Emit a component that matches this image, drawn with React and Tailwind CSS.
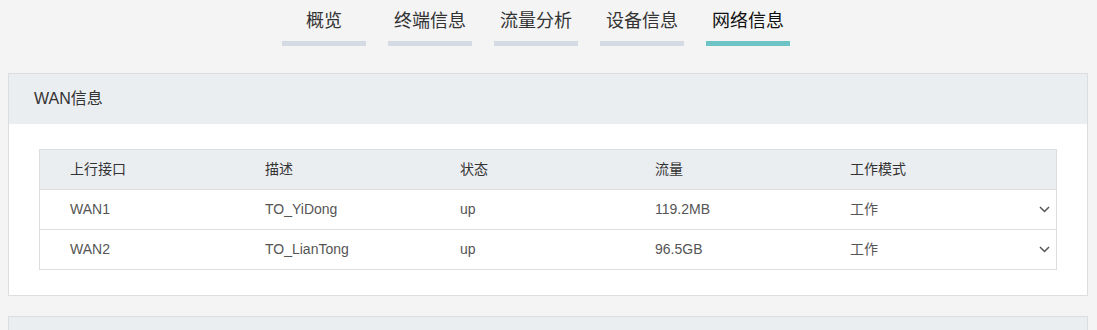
import React from "react";

const tabs = ["概览", "终端信息", "流量分析", "设备信息", "网络信息"];
const rows = [
  ["WAN1", "TO_YiDong", "up", "119.2MB", "工作"],
  ["WAN2", "TO_LianTong", "up", "96.5GB", "工作"],
];

function Chevron() {
  return (
    <svg width="11" height="7" viewBox="0 0 11 7" fill="none">
      <path d="M1 1l4.5 4.5L10 1" stroke="#555" strokeWidth="1.5" />
    </svg>
  );
}

export default function App() {
  const font = { fontFamily: '"Liberation Sans", "Noto Sans CJK SC", sans-serif' };
  return (
    <div className="w-[1097px] h-[330px] overflow-hidden bg-[#f4f4f4]" style={font}>
      <div className="flex justify-center pr-[25px] gap-[22px] pt-[9px]">
        {tabs.map((t, i) => (
          <div key={t} className="w-[84px] flex flex-col items-center">
            <div className={`h-[24px] leading-[24px] text-[18px] ${i === 4 ? "text-[#111]" : "text-[#333]"}`}>{t}</div>
            <div className={`mt-[8px] h-[5px] w-full ${i === 4 ? "bg-[#6cc5c4]" : "bg-[#d5dbe3]"}`} />
          </div>
        ))}
      </div>

      <div className="mt-[27px] ml-[8px] mr-[9px] border border-[#dddddd] bg-white">
        <div className="h-[50px] bg-[#ebeef1] px-[25px] flex items-center text-[16px] text-[#333]">WAN信息</div>
        <div className="px-[30px] py-[25px]">
          <div className="border border-[#dddddd] text-[14px]">
            <div className="grid grid-cols-[30px_195px_195px_195px_195px_1fr] h-[39px] items-center bg-[#ebeef1] text-[#333]">
              <div />
              <div>上行接口</div>
              <div>描述</div>
              <div>状态</div>
              <div>流量</div>
              <div>工作模式</div>
            </div>
            {rows.map((r) => (
              <div key={r[0]} className="grid grid-cols-[30px_195px_195px_195px_195px_1fr] h-[40px] items-center border-t border-[#dddddd] text-[#555]">
                <div />
                <div>{r[0]}</div>
                <div>{r[1]}</div>
                <div>{r[2]}</div>
                <div>{r[3]}</div>
                <div className="flex items-center justify-between pr-[6px]">
                  <span>{r[4]}</span>
                  <Chevron />
                </div>
              </div>
            ))}
          </div>
        </div>
      </div>

      <div className="mt-[20px] ml-[8px] mr-[9px] border border-[#dddddd] bg-[#ebeef1] h-[60px]" />
    </div>
  );
}
